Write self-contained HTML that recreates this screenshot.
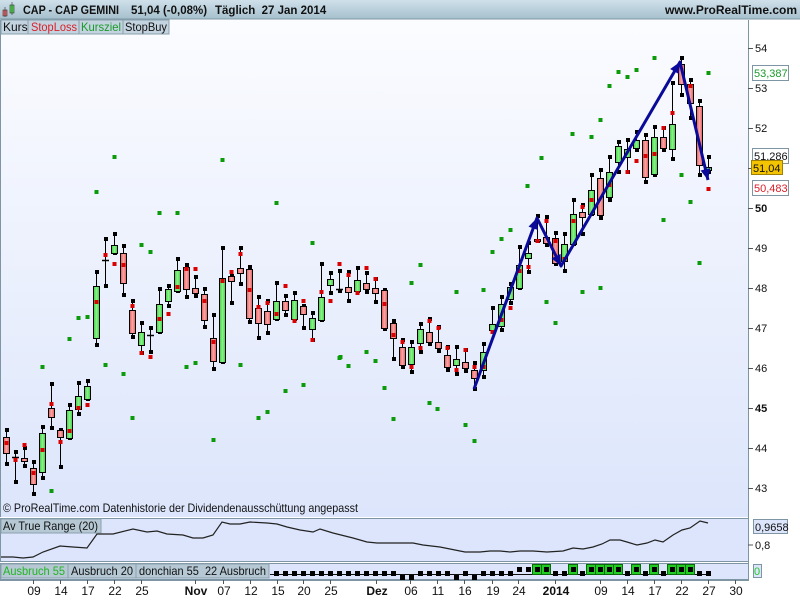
<!DOCTYPE html>
<html><head><meta charset="utf-8"><style>
html,body{margin:0;padding:0;width:800px;height:600px;overflow:hidden;background:#fff;font-family:"Liberation Sans",sans-serif}
svg{position:absolute;left:0;top:0}
</style></head><body>
<svg id="s" width="800" height="600" xmlns="http://www.w3.org/2000/svg" font-family="Liberation Sans, sans-serif">
<defs>
<linearGradient id="bg" x1="0" y1="0" x2="0" y2="1"><stop offset="0" stop-color="#fbfcff"/><stop offset="1" stop-color="#dce5fb"/></linearGradient>
<linearGradient id="hd" x1="0" y1="0" x2="0" y2="1"><stop offset="0" stop-color="#cfe0ea"/><stop offset="1" stop-color="#a6c0cd"/></linearGradient>
<linearGradient id="gb" x1="0" y1="0" x2="1" y2="0"><stop offset="0" stop-color="#3fcf3f"/><stop offset="0.5" stop-color="#8cf28c"/><stop offset="1" stop-color="#3fcf3f"/></linearGradient>
<linearGradient id="rb" x1="0" y1="0" x2="1" y2="0"><stop offset="0" stop-color="#e85a5a"/><stop offset="0.5" stop-color="#f7a8a8"/><stop offset="1" stop-color="#e85a5a"/></linearGradient>
</defs>
<rect x="0" y="0" width="800" height="19" fill="url(#hd)"/>
<line x1="0" y1="19" x2="800" y2="19" stroke="#7e96a4"/>
<rect x="0" y="20" width="748" height="497" fill="url(#bg)"/>
<line x1="0.5" y1="20" x2="0.5" y2="517" stroke="#7e96a4"/>
<line x1="748.5" y1="20" x2="748.5" y2="580" stroke="#7e96a4"/>
<rect x="3" y="10" width="4" height="6" fill="#e66" stroke="#333" stroke-width="0.6"/>
<line x1="5" y1="7" x2="5" y2="17" stroke="#333" stroke-width="0.6"/>
<rect x="10" y="5" width="4" height="8" fill="#5d5" stroke="#333" stroke-width="0.6"/>
<line x1="12" y1="2" x2="12" y2="15" stroke="#333" stroke-width="0.6"/>
<g font-size="11.5" font-weight="bold" fill="#111">
<text x="23" y="14" textLength="96" lengthAdjust="spacingAndGlyphs">CAP - CAP GEMINI</text>
<text x="131" y="14">51,04 (-0,08%)</text>
<text x="215" y="14" xml:space="preserve">Täglich  27 Jan 2014</text>
</g>
<text x="797" y="14" font-size="12" font-weight="bold" fill="#111" text-anchor="end">www.ProRealTime.com</text>
<g font-size="12">
<rect x="1" y="20" width="27" height="14" fill="#c3d3df" stroke="#8aa0ae"/><text x="3" y="31" fill="#111">Kurs</text>
<rect x="28" y="20" width="51" height="14" fill="#c3d3df" stroke="#8aa0ae"/><text x="31" y="31" fill="#d8202a" textLength="46" lengthAdjust="spacingAndGlyphs">StopLoss</text>
<rect x="79" y="20" width="44" height="14" fill="#c3d3df" stroke="#8aa0ae"/><text x="81" y="31" fill="#1a9a2a" textLength="40" lengthAdjust="spacingAndGlyphs">Kursziel</text>
<rect x="123" y="20" width="46" height="14" fill="#c3d3df" stroke="#8aa0ae"/><text x="125" y="31" fill="#111" textLength="42" lengthAdjust="spacingAndGlyphs">StopBuy</text>
</g>
<g id="chart"></g>
<text x="3" y="512" font-size="12" fill="#111" textLength="355" lengthAdjust="spacingAndGlyphs">© ProRealTime.com  Datenhistorie der Dividendenausschüttung angepasst</text>
<g font-size="11" fill="#111" id="axis"></g>
<rect x="0.5" y="518.5" width="748" height="43" fill="#dce5fb" stroke="#7e96a4"/>
<polyline id="atr" fill="none" stroke="#222" stroke-width="1.2"/>
<rect x="1" y="519" width="100" height="14" fill="#b5c8d4" stroke="#8aa0ae"/>
<text x="3" y="530" font-size="12" fill="#111" textLength="95" lengthAdjust="spacingAndGlyphs">Av True Range (20)</text>
<line x1="748" y1="545" x2="753" y2="545" stroke="#555"/>
<text x="755" y="549" font-size="11" fill="#111">0,8</text>
<rect x="753.5" y="519.5" width="34" height="14" fill="#dce5fb" stroke="#7e96a4"/>
<text x="755" y="531" font-size="11" fill="#111">0,9658</text>
<rect x="0.5" y="563.5" width="748" height="16" fill="#dce5fb" stroke="#7e96a4"/>
<line x1="270" y1="574.5" x2="709" y2="574.5" stroke="#111"/>
<g id="aus"></g>
<g font-size="12">
<rect x="1" y="564" width="67" height="14" fill="#b5c8d4" stroke="#8aa0ae"/><text x="3" y="575" fill="#22b522" textLength="62" lengthAdjust="spacingAndGlyphs">Ausbruch 55</text>
<rect x="68" y="564" width="68" height="14" fill="#b5c8d4" stroke="#8aa0ae"/><text x="71" y="575" fill="#111" textLength="62" lengthAdjust="spacingAndGlyphs">Ausbruch 20</text>
<rect x="136" y="564" width="133" height="14" fill="#b5c8d4" stroke="#8aa0ae"/><text x="139" y="575" fill="#111" xml:space="preserve" textLength="127" lengthAdjust="spacingAndGlyphs">donchian 55  22 Ausbruch</text>
</g>
<rect x="753.5" y="564.5" width="8" height="13" fill="#dce5fb" stroke="#7e96a4"/>
<text x="754" y="575" font-size="11" fill="#2c2">0</text>
<line x1="0" y1="580.5" x2="749" y2="580.5" stroke="#7e96a4"/>
<g id="dates" font-size="12" fill="#111" text-anchor="middle"></g>
</svg>
<script>
var NS="http://www.w3.org/2000/svg";
function el(p,t,a,txt){var e=document.createElementNS(NS,t);for(var k in a)e.setAttribute(k,a[k]);if(txt!=null)e.textContent=txt;p.appendChild(e);return e;}
var ch=document.getElementById('chart');
var C=[[6,430,437,453,464,'r'],[15,452,457,457,482,'d'],[24,448,458,461,466,'r'],[33,462,468,484,494,'r'],[42,427,433,472,478,'g'],[51,384,408,417,428,'r'],[60,430,430,437,467,'r'],[69,405,410,438,438,'g'],[78,383,396,409,414,'g'],[87,381,386,399,399,'g'],
[96,272,286,338,345,'g'],[105,239,260,260,286,'d'],[114,234,245,253,253,'g'],[123,246,253,283,295,'r'],[132,301,310,333,337,'r'],[141,323,332,345,353,'g'],[150,328,335,335,352,'d'],[159,289,304,332,332,'g'],[168,286,289,301,306,'g'],[177,259,270,291,291,'g'],[186,265,267,289,297,'r'],[195,277,288,293,296,'r'],
[204,289,294,320,327,'r'],[213,315,338,361,369,'r'],[222,248,278,362,362,'g'],[231,276,276,281,303,'r'],[240,248,268,273,284,'r'],[249,267,269,318,322,'r'],[258,297,308,323,338,'r'],[267,301,311,324,333,'r'],[276,283,301,319,319,'g'],[285,296,301,310,315,'r'],[294,293,300,319,319,'g'],[303,306,306,314,328,'r'],[312,313,318,329,340,'g'],[321,264,297,320,320,'g'],[330,273,279,285,293,'g'],[339,271,289,289,291,'d'],[348,272,287,292,301,'r'],[357,268,280,291,291,'g'],[366,273,283,289,292,'r'],[375,279,288,293,302,'r'],[384,290,290,328,329,'r'],
[393,321,323,338,359,'r'],[402,340,347,365,367,'r'],[411,342,347,364,372,'g'],[420,324,329,343,352,'g'],[429,319,332,342,344,'r'],[438,327,342,348,351,'r'],[447,347,355,367,370,'r'],[456,347,359,365,374,'g'],[465,350,362,368,371,'r'],[474,363,370,378,389,'r'],[483,344,352,370,377,'g'],[492,308,324,330,332,'g'],[501,297,304,326,330,'g'],[510,284,287,299,303,'g'],[519,247,265,288,288,'g'],[528,243,253,258,272,'g'],[537,216,239,241,241,'r'],[546,217,237,243,245,'r'],[555,233,238,263,264,'r'],[564,234,244,261,271,'g'],[573,200,214,244,244,'g'],[582,205,212,217,234,'r'],[591,175,190,214,214,'g'],[600,170,178,215,218,'r'],
[609,157,172,197,200,'g'],[618,142,146,162,172,'g'],[627,140,149,157,172,'g'],[636,132,140,148,150,'g'],[645,135,140,177,182,'r'],[654,127,137,174,175,'g'],[663,128,137,148,150,'r'],[672,83,124,149,159,'g'],[681,58,64,84,95,'r'],[690,80,84,103,118,'r'],[699,101,106,165,175,'r'],[708,157,167,170,172,'g']];
C.forEach(function(c){
 var x=c[0];
 el(ch,'line',{x1:x+0.5,y1:c[1],x2:x+0.5,y2:c[4],stroke:'#000','stroke-width':1});
 el(ch,'rect',{x:x-1,y:c[1]-2,width:4,height:4,fill:'#000'});
 el(ch,'rect',{x:x-1,y:c[4]-2,width:4,height:4,fill:'#000'});
 if(c[5]=='d'){el(ch,'line',{x1:x-3,y1:c[2]+0.5,x2:x+4,y2:c[2]+0.5,stroke:'#000','stroke-width':1.5});}
 else el(ch,'rect',{x:x-2.5,y:c[2]+0.5,width:6,height:Math.max(2,c[3]-c[2]),fill:c[5]=='g'?'url(#gb)':'url(#rb)',stroke:'#000','stroke-width':1});
});
var R=[[6,443],[15,460],[24,445],[33,473],[42,450],[51,404],[60,442],[69,431],[78,408],[87,405],[96,302],[105,255],[114,264],[123,265],[132,306],[141,353],[150,357],[159,319],[168,314],[177,287],[186,269],[195,269],[204,301],[213,342],[222,281],[231,272],[240,254],[249,290],[258,307],[267,303],[276,314],[285,286],[294,321],[303,301],[312,340],[321,292],[330,301],[339,264],[348,275],[357,293],[366,268],[375,279],[384,304],[393,335],[402,342],[411,367],[420,348],[429,321],[438,328],[447,348],[456,370],[465,350],[474,367],[483,367],[492,332],[501,320],[510,308],[519,271],[528,267],[537,241],[546,221],[555,241],[564,259],[573,221],[582,207],[591,200],[609,185],[627,172],[636,161],[645,156],[654,154],[663,128],[672,113],[690,86],[708,189]];
R.forEach(function(p){el(ch,'rect',{x:p[0]-1.5,y:p[1]-2,width:4,height:4,fill:'#d80000'});});
var G=[[51,491],[42,367],[69,339],[78,318],[87,317],[105,365],[123,374],[132,418],[141,245],[150,252],[186,367],[195,363],[96,192],[114,157],[159,213],[177,213],[222,160],[240,365],[276,203],[312,243],[339,358],[348,366],[366,352],[375,361],[213,440],[258,418],[267,412],[285,391],[303,385],[340,357],[384,388],[393,419],[411,283],[420,265],[429,403],[437,409],[456,292],[465,425],[474,441],[483,290],[492,252],[501,239],[510,230],[527,186],[541,158],[546,302],[555,323],[572,134],[582,292],[600,288],[609,86],[618,72],[627,77],[636,70],[654,58],[708,73],[681,175],[690,202],[699,263],[663,220],[591,137],[600,120]];
G.forEach(function(p){el(ch,'rect',{x:p[0]-1.5,y:p[1]-2,width:4,height:4,fill:'#0a9a0a'});});
var pts=[[474,389],[537,218],[561,266],[680,62],[708,180]];
el(ch,'polyline',{points:pts.map(function(p){return p.join(',')}).join(' '),fill:'none',stroke:'#0a0a9a','stroke-width':3,'stroke-linejoin':'round'});
function head(a,b){var dx=b[0]-a[0],dy=b[1]-a[1],L=Math.sqrt(dx*dx+dy*dy);dx/=L;dy/=L;var s=11,w=5;
 var bx=b[0]-dx*s,by=b[1]-dy*s;
 el(ch,'polygon',{points:b[0]+','+b[1]+' '+(bx-dy*w)+','+(by+dx*w)+' '+(bx+dy*w)+','+(by-dx*w),fill:'#0a0a9a'});}
for(var i=1;i<pts.length;i++)head(pts[i-1],pts[i]);
var ax=document.getElementById('axis');
for(var v=43;v<=54;v++){var y=48+(54-v)*40;if(y>500)continue;
 el(ax,'line',{x1:748,y1:y+0.5,x2:753,y2:y+0.5,stroke:'#555'});
 var t=el(ax,'text',{x:755,y:y+4},String(v));if(v==50||v==45)t.setAttribute('font-weight','bold');}
function box(y,txt,col,bg){el(ax,'rect',{x:752.5,y:y-7.5,width:36,height:15,fill:bg,stroke:'#7e96a4'});el(ax,'text',{x:754,y:y+4,fill:col},txt);}
box(73,'53,387','#1a9a2a','#fff');
box(156,'51,286','#111','#fff');
el(ax,'rect',{x:751.5,y:160.5,width:31,height:14,fill:'#f5c400',stroke:'#a08000'});
el(ax,'text',{x:753,y:172,fill:'#111'},'51,04');
box(188,'50,483','#d8202a','#fff');
var A=[[1,557],[13,557],[23,558],[33,557],[43,552],[60,546],[73,547],[87,548],[97,534],[113,534],[133,529],[147,532],[157,531],[167,534],[183,535],[193,538],[203,538],[213,535],[222,522],[230,524],[240,524],[250,522],[267,523],[277,524],[287,527],[300,530],[313,532],[320,529],[333,533],[353,538],[367,542],[377,543],[387,543],[400,543],[413,543],[423,545],[440,547],[450,549],[465,552],[480,552],[490,551],[500,551],[510,552],[520,551],[533,551],[547,552],[563,551],[573,548],[583,549],[593,547],[602,544],[610,540],[620,540],[627,542],[637,545],[647,543],[655,540],[663,542],[673,535],[682,530],[690,528],[700,521],[708,523]];
document.getElementById('atr').setAttribute('points',A.map(function(p){return p.join(',')}).join(' '));
var au=document.getElementById('aus');
var greens=[537,546,573,591,600,609,618,636,654,672,681,690];
for(var x=276;x<=708;x+=9){
 var y=573;
 if(x==519||x==528)y=569;
 if(x==402||x==411||x==456||x==474)y=577;
 if(greens.indexOf(x)>=0){el(au,'rect',{x:x-4.5,y:564.5,width:9,height:10,fill:'#22cc22',stroke:'#0a6a0a'});y=569;}
 el(au,'rect',{x:x-2,y:y-2,width:5,height:5,fill:'#000'});
}
var dg=document.getElementById('dates');
var D=[[33,'09'],[60,'14'],[87,'17'],[114,'22'],[141,'25'],[195,'Nov',1],[223,'07'],[250,'12'],[277,'15'],[303,'20'],[330,'25'],[376,'Dez',1],[410,'06'],[437,'11'],[464,'16'],[492,'19'],[518,'24'],[555,'2014',1],[600,'09'],[627,'14'],[654,'17'],[681,'22'],[708,'27'],[735,'30']];
D.forEach(function(d){el(dg,'line',{x1:d[0]+0.5,y1:580,x2:d[0]+0.5,y2:584,stroke:'#555'});var t=el(dg,'text',{x:d[0]+1,y:595},d[1]);if(d[2])t.setAttribute('font-weight','bold');});
</script>
</body></html>
